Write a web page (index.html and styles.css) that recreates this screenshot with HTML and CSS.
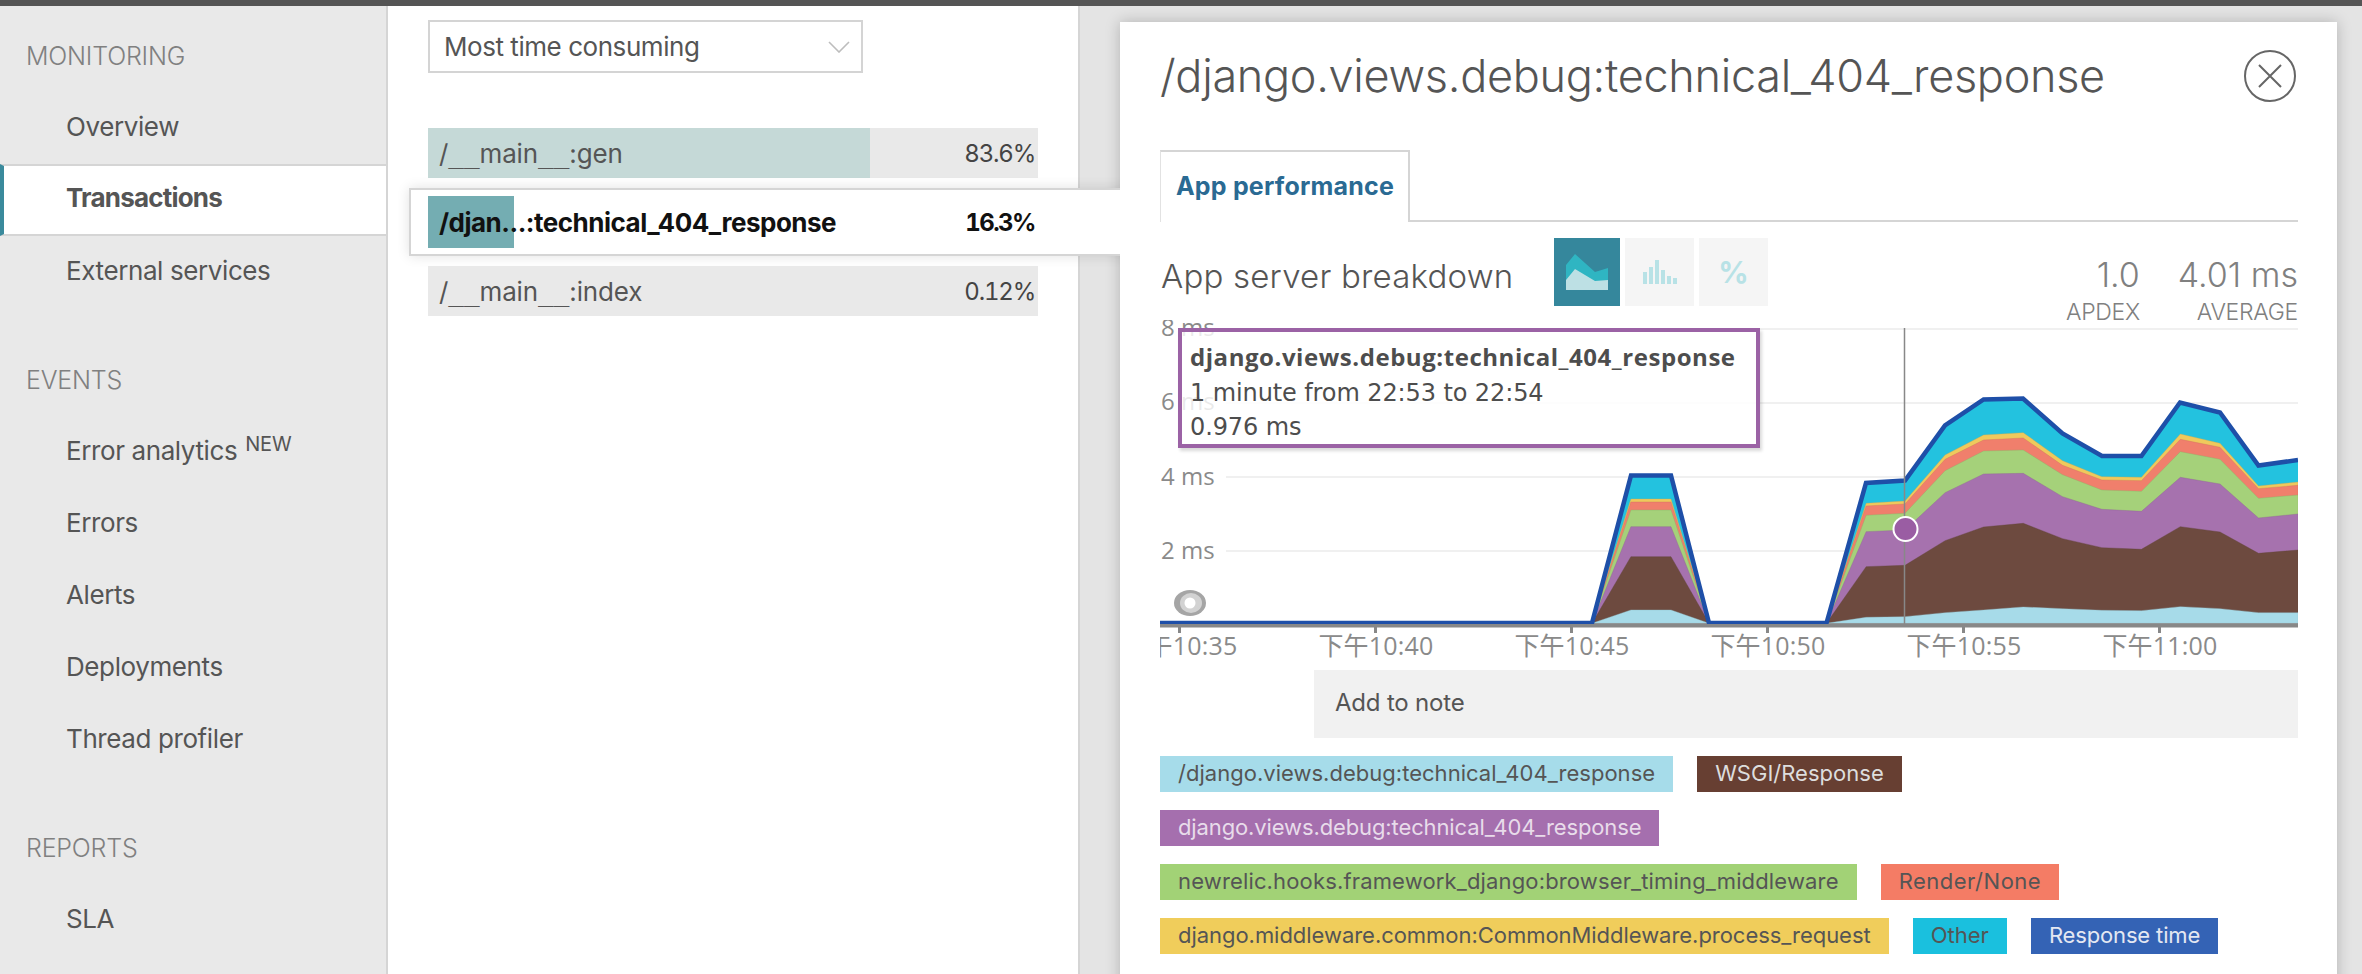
FILE: index.html
```html
<!DOCTYPE html>
<html lang="en">
<head>
<meta charset="utf-8">
<title>Transactions</title>
<link rel="stylesheet" href="styles.css">
</head>
<body>
<div class="topbar"></div>
<div class="main">
  <nav class="sidebar">
    <section class="group">
      <h4 class="group-head">MONITORING</h4>
      <a class="nav-item">Overview</a>
      <a class="nav-item active">Transactions</a>
      <a class="nav-item">External services</a>
    </section>
    <section class="group">
      <h4 class="group-head">EVENTS</h4>
      <a class="nav-item">Error analytics <sup class="new">NEW</sup></a>
      <a class="nav-item">Errors</a>
      <a class="nav-item">Alerts</a>
      <a class="nav-item">Deployments</a>
      <a class="nav-item">Thread profiler</a>
    </section>
    <section class="group">
      <h4 class="group-head">REPORTS</h4>
      <a class="nav-item">SLA</a>
    </section>
  </nav>

  <div class="list-col">
    <div class="select">
      <span>Most time consuming</span>
      <svg class="chevron" width="22" height="12" viewBox="0 0 22 12"><path d="M1 1 L11 11 L21 1" fill="none" stroke="#bdbdbd" stroke-width="1.6"/></svg>
    </div>
    <div class="rows">
      <div class="row">
        <div class="row-fill" style="width:442px;background:#c5d9d7"></div>
        <span class="row-name">/<span class="us">__</span>main<span class="us">__</span>:gen</span><span class="row-pct">83.6%</span>
      </div>
      <div class="row-active">
        <div class="row row-clear">
          <div class="row-fill" style="width:86px;background:#74adb2"></div>
          <span class="row-name">/djan...:technical_404_response</span><span class="row-pct">16.3%</span>
        </div>
      </div>
      <div class="row">
        <span class="row-name">/<span class="us">__</span>main<span class="us">__</span>:index</span><span class="row-pct">0.12%</span>
      </div>
    </div>
  </div>

  <div class="detail-col">
    <div class="panel">
      <header class="panel-head">
        <h1 class="panel-title">/django.views.debug:technical_404_response</h1>
        <svg class="close" width="52" height="52" viewBox="0 0 52 52"><circle cx="26" cy="26" r="25" fill="none" stroke="#666" stroke-width="2"/><path d="M15 15 L37 37 M37 15 L15 37" stroke="#666" stroke-width="2" fill="none"/></svg>
      </header>
      <div class="tabs"><div class="tab">App performance</div></div>

      <div class="chart-head">
        <h3 class="chart-title">App server breakdown</h3>
        <div class="chart-btns">
          <div class="btn btn-on">
            <svg width="66" height="68" viewBox="0 0 66 68"><path d="M12 27 L21 16 L41 34 L54 30 L54 44 L12 44 Z" fill="#2fb5c2"/><path d="M12 42 L21 31 L41 43 L54 42 L54 52 L12 52 Z" fill="#bde0e4"/></svg>
          </div>
          <div class="btn">
            <svg width="69" height="68" viewBox="0 0 69 68"><g fill="#b8e2e6"><rect x="18" y="34" width="4" height="12"/><rect x="24" y="29" width="4" height="17"/><rect x="30" y="22" width="4" height="24"/><rect x="36" y="32" width="4" height="14"/><rect x="42" y="38" width="4" height="8"/><rect x="48" y="40" width="4" height="6"/></g></svg>
          </div>
          <div class="btn btn-pct">%</div>
        </div>
        <div class="stats">
          <div class="stat"><div class="stat-val">1.0</div><div class="stat-lab">APDEX</div></div>
          <div class="stat"><div class="stat-val">4.01 ms</div><div class="stat-lab">AVERAGE</div></div>
        </div>
      </div>

      <div class="chart">
        <svg class="chart-svg" width="1138" height="350" viewBox="1160 320 1138 350">
          <g stroke="#f0f0f0" stroke-width="2">
            <line x1="1226" y1="329" x2="2298" y2="329"/>
            <line x1="1226" y1="403" x2="2298" y2="403"/>
            <line x1="1226" y1="477" x2="2298" y2="477"/>
            <line x1="1226" y1="551" x2="2298" y2="551"/>
          </g>
          <g class="y-lab">
            <text x="1161" y="336">8 ms</text>
            <text x="1161" y="410">6 ms</text>
            <text x="1161" y="485">4 ms</text>
            <text x="1161" y="559">2 ms</text>
          </g>
          <g transform="translate(1740 300) scale(0.3967 0.3333)" stroke-width="1" vector-effect="non-scaling-stroke">
            <!-- left hump -->
            <polygon fill="#23c2df" points="-373,970 -275,526 -174,526 -78,970"/>
            <polygon fill="#efc95c" stroke="#c9a94f" points="-373,970 -275,597 -174,597 -78,970"/>
            <polygon fill="#f07f6c" stroke="#c96f5e" points="-373,970 -275,606 -174,606 -78,970"/>
            <polygon fill="#a5d17a" stroke="#8aaf66" points="-373,970 -275,630 -174,630 -78,970"/>
            <polygon fill="#a672ae" stroke="#8c6093" points="-373,970 -275,680 -174,680 -78,970"/>
            <polygon fill="#6d4a3f" stroke="#5f4238" points="-373,970 -275,770 -174,770 -78,970"/>
            <polygon fill="#a7dbe9" stroke="#8fbcc8" points="-373,970 -275,930 -174,930 -78,970"/>
            <!-- right mass -->
            <polygon fill="#23c2df" points="218,970 318,550 416,542 517,376 614,298 714,296 813,400 912,468 1012,468 1110,307 1210,338 1307,496 1407,480 1407,970"/>
            <polygon fill="#efc95c" stroke="#c9a94f" points="218,970 318,610 416,603 517,465 614,405 714,398 813,482 912,530 1012,532 1110,402 1210,430 1307,558 1407,546 1407,970"/>
            <polygon fill="#f07f6c" stroke="#c96f5e" points="218,970 318,618 416,612 517,478 614,420 714,414 813,496 912,540 1012,542 1110,418 1210,442 1307,566 1407,556 1407,970"/>
            <polygon fill="#a5d17a" stroke="#8aaf66" points="218,970 318,646 416,640 517,512 614,453 714,450 813,524 912,570 1012,574 1110,455 1210,478 1307,595 1407,585 1407,970"/>
            <polygon fill="#a672ae" stroke="#8c6093" points="218,970 318,695 416,690 517,578 614,522 714,520 813,590 912,628 1012,634 1110,532 1210,552 1307,654 1407,642 1407,970"/>
            <polygon fill="#6d4a3f" stroke="#5f4238" points="218,970 318,800 416,796 517,722 614,681 714,670 813,716 912,743 1012,748 1110,680 1210,696 1307,760 1407,750 1407,970"/>
            <polygon fill="#a7dbe9" stroke="#8fbcc8" points="218,970 318,952 416,950 517,938 614,930 714,921 813,926 912,931 1012,932 1110,920 1210,926 1307,938 1407,938 1407,970"/>
          </g>
          <path class="total" d="M1160 623 L1592 623 L1631 475.5 L1671 475.5 L1709 623 L1826.5 623 L1866 483 L1905 480.5 L1945 425.5 L1983.6 399.5 L2023 398.5 L2062.5 433.5 L2102 456 L2141.4 456 L2180 402.5 L2220 412.5 L2258.5 465.5 L2298 460"/>
          <rect x="1160" y="624" width="1138" height="3.5" fill="#888"/>
          <g fill="#888">
            <rect x="1178" y="626" width="3" height="7"/><rect x="1374" y="626" width="3" height="7"/><rect x="1570" y="626" width="3" height="7"/><rect x="1766" y="626" width="3" height="7"/><rect x="1962" y="626" width="3" height="7"/><rect x="2158" y="626" width="3" height="7"/>
          </g>
          <line x1="1904.5" y1="328" x2="1904.5" y2="624" stroke="#888" stroke-width="1.5"/>
          <ellipse cx="1905.5" cy="529" rx="12" ry="12" fill="#9a5da3" stroke="#fff" stroke-width="2"/>
          <ellipse cx="1190" cy="603" rx="16" ry="13" fill="#a5a5a5"/>
          <ellipse cx="1191" cy="603" rx="11" ry="10" fill="#d2d2d2"/>
          <circle cx="1190" cy="603" r="5.5" fill="#fff"/>
          <g class="x-lab">
            <text x="1180" y="655">下午10:35</text>
            <text x="1376" y="655">下午10:40</text>
            <text x="1572" y="655">下午10:45</text>
            <text x="1768" y="655">下午10:50</text>
            <text x="1964" y="655">下午10:55</text>
            <text x="2160" y="655">下午11:00</text>
          </g>
        </svg>
        <div class="tooltip">
          <div class="tip-title">django.views.debug:technical_404_response</div>
          <div class="tip-line">1 minute from 22:53 to 22:54</div>
          <div class="tip-line">0.976 ms</div>
        </div>
      </div>

      <div class="note">Add to note</div>

      <div class="legend">
        <div class="legend-row"><span class="tag tag-req">/django.views.debug:technical_404_response</span><span class="tag tag-wsgi">WSGI/Response</span></div>
        <div class="legend-row"><span class="tag tag-view">django.views.debug:technical_404_response</span></div>
        <div class="legend-row"><span class="tag tag-hook">newrelic.hooks.framework_django:browser_timing_middleware</span><span class="tag tag-render">Render/None</span></div>
        <div class="legend-row"><span class="tag tag-mw">django.middleware.common:CommonMiddleware.process_request</span><span class="tag tag-other">Other</span><span class="tag tag-resp">Response time</span></div>
      </div>
    </div>
  </div>
</div>
</body>
</html>
```
FILE: styles.css
```css
* { box-sizing: border-box; }
html, body { margin: 0; height: 100%; overflow: hidden; }
body { font-family: Inter, "Noto Sans", sans-serif; color: #555; background: #fff; }
.topbar { height: 6px; background: #555; }
.main { display: flex; height: 968px; }

.sidebar { width: 388px; flex: none; background: #e9e9e9; border-right: 2px solid #d5d5d5; padding-top: 26px; overflow: hidden; }
.group { margin-bottom: 48px; }
.group-head { margin: 0 0 12px; height: 48px; line-height: 48px; padding-left: 26px; font-size: 25px; font-weight: 300; color: #808080; letter-spacing: -0.2px; }
.nav-item { display: block; height: 72px; line-height: 69px; padding-left: 66px; font-size: 26px; letter-spacing: -0.4px; font-weight: 400; color: #555; white-space: nowrap; }
.nav-item.active { position: relative; width: 388px; background: #fff; border-top: 2px solid #d5d5d5; border-bottom: 2px solid #d5d5d5; border-left: 4px solid #3a8a9c; padding-left: 62px; line-height: 64px; font-weight: 700; letter-spacing: -0.8px; }
.new { font-size: 20px; line-height: 0; letter-spacing: -0.1px; vertical-align: 9px; margin-left: 1px; }

.list-col { width: 692px; flex: none; border-right: 2px solid #d5d5d5; padding: 14px 0 0 40px; position: relative; z-index: 2; }
.select { width: 435px; height: 53px; border: 2px solid #d4d4d4; background: #fff; display: flex; align-items: center; justify-content: space-between; padding: 0 11px 0 14px; font-size: 26px; letter-spacing: -0.45px; color: #555; }
.rows { margin-top: 55px; width: 610px; display: flex; flex-direction: column; gap: 10px; }
.row { position: relative; height: 50px; background: #e9e9e9; display: flex; align-items: center; justify-content: space-between; padding: 0 3px 0 11px; font-size: 26px; letter-spacing: -0.15px; color: #555; }
.row-fill { position: absolute; left: 0; top: 0; bottom: 0; }
.row-name, .row-pct { position: relative; white-space: nowrap; }
.us { font-family: "DejaVu Sans Mono", monospace; letter-spacing: 0; }
.row-pct { font-size: 24px; letter-spacing: -1.2px; color: #444; font-variant-numeric: tabular-nums; }
.row-active { position: relative; margin-left: -19px; width: 719px; height: 68px; padding: 6px 0 6px 17px; background: #fff; border: 2px solid #d5d5d5; border-right: 0; box-shadow: 0 0 12px rgba(0, 0, 0, .12); }
.row-active::after { content: ""; position: absolute; right: -12px; top: -14px; bottom: -14px; width: 20px; background: #fff; }
.row-clear { width: 610px; height: 52px; background: transparent; font-weight: 700; color: #111; letter-spacing: -0.5px; }
.row-clear .row-pct { color: #111; letter-spacing: -1.5px; }

.detail-col { flex: 1; background: #e4e4e4; padding: 16px 25px 0 40px; overflow: hidden; }
.panel { background: #fff; height: 1000px; padding: 0 39px 0 40px; box-shadow: 0 0 14px rgba(0, 0, 0, .22); }
.panel-head { display: flex; justify-content: space-between; align-items: center; padding-top: 28px; }
.panel-title { margin: 0; font-size: 45px; font-weight: 300; letter-spacing: -0.3px; color: #555; white-space: nowrap; line-height: 52px; }
.close { flex: none; margin-right: 2px; }
.tabs { margin-top: 48px; height: 72px; border-bottom: 2px solid #d5d5d5; }
.tab { width: 250px; height: 72px; background: #fff; border-top: 2px solid #d5d5d5; border-left: 1px solid #e2e2e2; border-right: 2px solid #d5d5d5; padding-left: 15px; line-height: 68px; font-size: 25px; font-weight: 700; letter-spacing: 0.2px; color: #2a6a93; }

.chart-head { display: flex; margin-top: 16px; height: 82px; }
.chart-title { margin: 0; width: 394px; flex: none; padding-left: 1px; font-size: 33px; font-weight: 300; line-height: 76px; letter-spacing: 0.2px; color: #555; white-space: nowrap; }
.chart-btns { display: flex; gap: 5px; height: 68px; }
.btn { width: 69px; height: 68px; background: #f5f5f5; display: flex; }
.btn-on { width: 66px; background: #35879c; }
.btn-pct { align-items: center; justify-content: center; font-size: 30px; font-weight: 700; color: #b8e2e6; }
.stats { margin-left: auto; display: flex; gap: 38px; text-align: right; padding-top: 20px; }
.stat-val { height: 34px; line-height: 34px; font-size: 34px; font-weight: 300; color: #808080; white-space: nowrap; }
.stat-lab { margin-top: 8px; line-height: 24px; font-size: 23px; font-weight: 300; letter-spacing: -0.3px; color: #808080; }

.chart { position: relative; height: 350px; }
.chart-svg { display: block; }
.y-lab text { font-family: "Open Sans", sans-serif; font-size: 24px; fill: #8a8a8a; }
.x-lab text { font-family: "Open Sans", "Noto Sans CJK SC", sans-serif; font-size: 25px; letter-spacing: 0.2px; fill: #8a8a8a; text-anchor: middle; }
.total { fill: none; stroke: #1e4fa8; stroke-width: 4.5; stroke-linejoin: miter; }
.tooltip { position: absolute; left: 18px; top: 8px; width: 582px; height: 120px; padding: 8px 0 0 8px; border: 4px solid #9b62a5; background: rgba(255, 255, 255, .82); box-shadow: 2px 3px 3px rgba(0, 0, 0, .15); color: #4d4d4d; white-space: nowrap; }
.tip-title { font-family: "Open Sans", sans-serif; font-weight: 700; font-size: 24px; line-height: 34px; height: 36px; letter-spacing: 0.55px; }
.tip-line { font-family: "DejaVu Sans", sans-serif; font-size: 24px; letter-spacing: -0.1px; line-height: 34px; height: 34px; }

.note { margin-left: 154px; height: 68px; background: #f1f1f1; padding-left: 21px; line-height: 66px; font-size: 24px; letter-spacing: -0.2px; color: #555; }
.legend { margin-top: 18px; display: flex; flex-direction: column; gap: 18px; }
.legend-row { display: flex; gap: 24px; }
.tag { height: 36px; line-height: 35px; padding: 0 18px; font-size: 22px; font-weight: 400; letter-spacing: 0.02px; white-space: nowrap; color: #555; }
.tag-req { background: #a6dcea; }
.tag-wsgi { background: #673f32; color: #ddd; }
.tag-view { background: #a56fae; color: #e8dcea; letter-spacing: -0.12px; }
.tag-hook { background: #a2d276; letter-spacing: 0.15px; }
.tag-render { background: #f47c65; letter-spacing: 0.5px; }
.tag-mw { background: #f0cd5b; letter-spacing: -0.04px; }
.tag-other { background: #1ac0de; }
.tag-resp { background: #3463b5; color: #e4e8f2; letter-spacing: -0.15px; }
```
